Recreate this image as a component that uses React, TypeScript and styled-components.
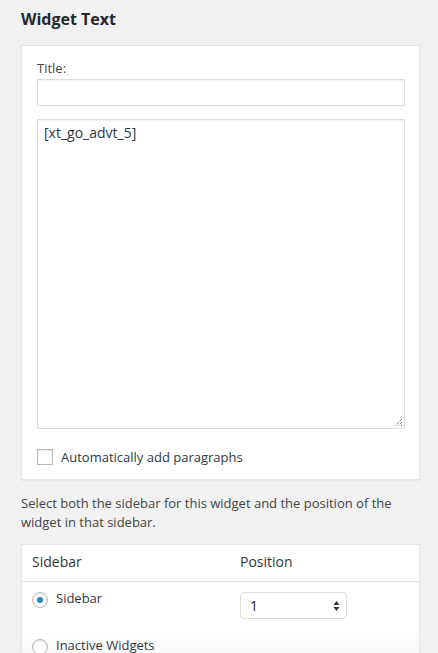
import styled, { createGlobalStyle } from 'styled-components';

const GlobalStyle = createGlobalStyle`
  html, body {
    margin: 0;
    padding: 0;
    background: #f1f1f1;
  }
  body {
    font-family: 'Open Sans', 'Noto Sans', sans-serif;
    font-size: 13px;
    color: #444;
    overflow: hidden;
  }
`;

const Page = styled.div`
  height: 653px;
  padding: 0 18px 0 21px;
  overflow: hidden;
  box-sizing: border-box;
`;

const Heading = styled.h2`
  margin: 0;
  padding-top: 8px;
  font-size: 16px;
  line-height: 22px;
  font-weight: 700;
  color: #23282d;
`;

const Card = styled.div`
  margin-top: 15px;
  width: 399px;
  box-sizing: border-box;
  background: #fff;
  border: 1px solid #e5e5e5;
  box-shadow: 0 1px 1px rgba(0, 0, 0, 0.04);
`;

const Form = styled.div`
  padding: 13px 14px 14px 15px;
  display: flex;
  flex-direction: column;
`;

const Label = styled.label`
  display: block;
  line-height: 18px;
  color: #444;
`;

const TextInput = styled.div`
  margin-top: 2px;
  height: 27px;
  box-sizing: border-box;
  border: 1px solid #ddd;
  box-shadow: inset 0 1px 2px rgba(0, 0, 0, 0.07);
  background: #fff;
`;

const TextArea = styled.div`
  position: relative;
  margin-top: 13px;
  height: 310px;
  box-sizing: border-box;
  border: 1px solid #ddd;
  box-shadow: inset 0 1px 2px rgba(0, 0, 0, 0.07);
  padding: 2px 6px;
  color: #32373c;
  font-size: 14px;
  line-height: 22px;
`;

const Grip = styled.svg`
  position: absolute;
  right: 1px;
  bottom: 1px;
`;

const CheckRow = styled.div`
  margin-top: 20px;
  display: flex;
  align-items: center;
  gap: 8px;
  line-height: 16px;
  color: #32373c;
`;

const CheckBox = styled.span`
  width: 16px;
  height: 16px;
  box-sizing: border-box;
  border: 1px solid #b4b9be;
  box-shadow: inset 0 1px 2px rgba(0, 0, 0, 0.1);
  background: #fff;
`;

const Description = styled.p`
  margin: 14px 0 0;
  line-height: 19px;
  color: #444;
  width: 399px;
`;

const ChooserCard = styled(Card)`
  margin-top: 12px;
`;

const ChooserRow = styled.div<{ $header?: boolean; $fade?: boolean }>`
  display: grid;
  grid-template-columns: 208px 1fr;
  border-bottom: ${(p) => (p.$header ? '1px solid #e1e1e1' : 'none')};
  padding: ${(p) => (p.$header ? '8px 0 10px' : '9px 0 10px')};
  line-height: 18px;
  font-size: ${(p) => (p.$header ? '14px' : '13px')};
  color: #32373c;
  background: ${(p) => (p.$fade ? 'linear-gradient(to bottom, #fff 0%, #f5f5f5 100%)' : 'transparent')};
`;

const Cell = styled.div`
  padding-left: 10px;
  display: flex;
  align-items: flex-start;
  gap: 8px;
`;

const PosCell = styled.div`
  padding-left: 10px;
`;

const Radio = styled.span<{ $checked?: boolean }>`
  width: 16px;
  height: 16px;
  box-sizing: border-box;
  border-radius: 50%;
  border: 1px solid #b4b9be;
  box-shadow: inset 0 1px 2px rgba(0, 0, 0, 0.1);
  background: #fff;
  display: flex;
  align-items: center;
  justify-content: center;
  margin-top: 1px;
  &::after {
    content: '';
    display: ${(p) => (p.$checked ? 'block' : 'none')};
    width: 6px;
    height: 6px;
    border-radius: 50%;
    background: #1e8cbe;
  }
`;

const RadioLabel = styled.span`
  margin-top: -2px;
`;

const Select = styled.div`
  width: 107px;
  height: 27px;
  box-sizing: border-box;
  border: 1px solid #ddd;
  border-radius: 4px;
  background: #fff;
  display: flex;
  align-items: center;
  justify-content: space-between;
  padding: 0 6px 0 9px;
  font-size: 14px;
  color: #222;
  margin-top: 1px;
`;

export default function App() {
  return (
    <>
      <GlobalStyle />
      <Page>
        <Heading>Widget Text</Heading>
        <Card>
          <Form>
            <Label>Title:</Label>
            <TextInput />
            <TextArea>
              [xt_go_advt_5]
              <Grip width="10" height="10" viewBox="0 0 10 10">
                <path d="M9 2 L2 9 M9 5 L5 9 M9 8 L8 9" stroke="#555" strokeWidth="1" strokeDasharray="1 1" fill="none" />
              </Grip>
            </TextArea>
            <CheckRow>
              <CheckBox />
              Automatically add paragraphs
            </CheckRow>
          </Form>
        </Card>
        <Description>
          Select both the sidebar for this widget and the position of the widget in that sidebar.
        </Description>
        <ChooserCard>
          <ChooserRow $header>
            <Cell>Sidebar</Cell>
            <PosCell>Position</PosCell>
          </ChooserRow>
          <ChooserRow>
            <Cell>
              <Radio $checked />
              <RadioLabel>Sidebar</RadioLabel>
            </Cell>
            <PosCell>
              <Select>
                1
                <svg width="7" height="12" viewBox="0 0 7 12">
                  <path d="M3.5 1 L6.5 5 H0.5 Z M3.5 11 L6.5 7 H0.5 Z" fill="#333" />
                </svg>
              </Select>
            </PosCell>
          </ChooserRow>
          <ChooserRow $fade>
            <Cell>
              <Radio />
              <RadioLabel>Inactive Widgets</RadioLabel>
            </Cell>
            <PosCell />
          </ChooserRow>
        </ChooserCard>
      </Page>
    </>
  );
}
